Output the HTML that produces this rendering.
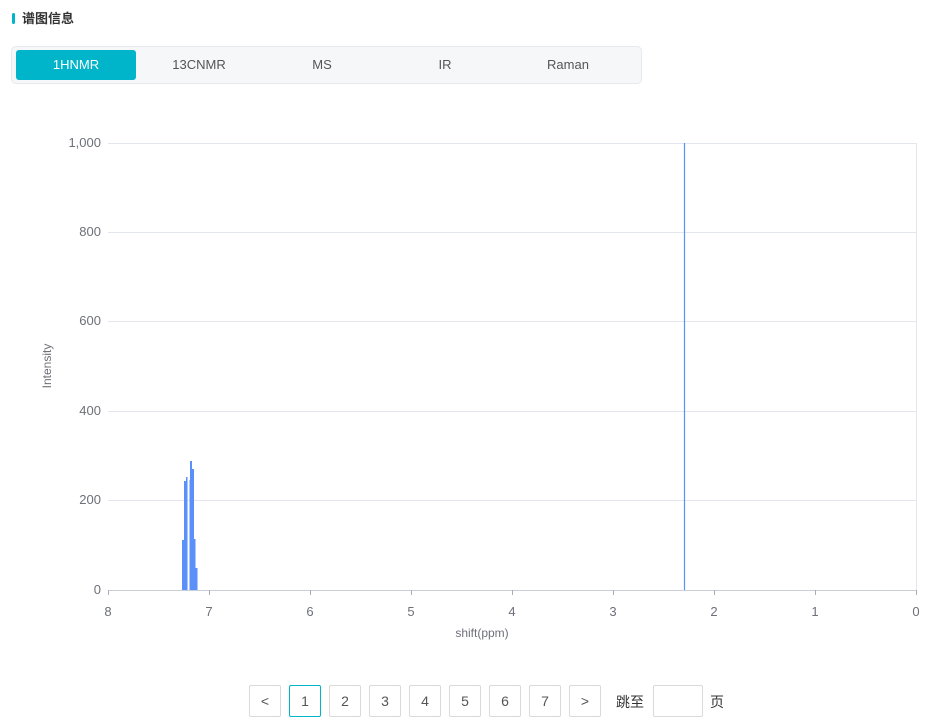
<!DOCTYPE html>
<html><head><meta charset="utf-8"><style>
body{margin:0;width:940px;height:718px;background:#fff;font-family:"Liberation Sans","Noto Sans CJK SC",sans-serif;position:relative;overflow:hidden}
.title{position:absolute;left:12px;top:10px;font-size:13px;font-weight:bold;color:#333;line-height:17px}
.title:before{content:"";position:absolute;left:0;top:3px;width:3px;height:11px;background:#00b5c9;border-radius:2px}
.title span{margin-left:10px}
.tabs{position:absolute;left:11px;top:46px;width:631px;height:38px;background:#f5f7f9;border:1px solid #e6e9ed;border-radius:5px;box-sizing:border-box}
.tab{position:absolute;top:3px;width:120px;height:30px;line-height:30px;text-align:center;font-size:13px;color:#555}
.tab.on{background:#00b5c9;color:#fff;border-radius:3px}
.pg{position:absolute;top:685px;width:32px;height:32px;border:1px solid #d9d9d9;box-sizing:border-box;text-align:center;line-height:30px;font-size:14px;color:#555;border-radius:2px}
.pg.on{border-color:#00b5c9}
</style></head><body>
<div class="title"><span>谱图信息</span></div>
<div class="tabs">
<div class="tab on" style="left:4px">1HNMR</div>
<div class="tab" style="left:127px">13CNMR</div>
<div class="tab" style="left:250px">MS</div>
<div class="tab" style="left:373px">IR</div>
<div class="tab" style="left:496px">Raman</div>
</div>
<svg width="940" height="718" style="position:absolute;left:0;top:0" font-family="Liberation Sans,sans-serif">
<g stroke="#e3e6ee" stroke-width="1">
<line x1="108" y1="143.5" x2="917" y2="143.5"/>
<line x1="108" y1="232.5" x2="917" y2="232.5"/>
<line x1="108" y1="321.5" x2="917" y2="321.5"/>
<line x1="108" y1="411.5" x2="917" y2="411.5"/>
<line x1="108" y1="500.5" x2="917" y2="500.5"/>
<line x1="916.5" y1="143" x2="916.5" y2="590"/>
</g>
<line x1="108" y1="590.5" x2="917" y2="590.5" stroke="#c9ced8"/>
<g stroke="#aab" stroke-width="1">
<line x1="108.5" y1="590" x2="108.5" y2="595"/><line x1="209.5" y1="590" x2="209.5" y2="595"/><line x1="310.5" y1="590" x2="310.5" y2="595"/><line x1="411.5" y1="590" x2="411.5" y2="595"/><line x1="512.5" y1="590" x2="512.5" y2="595"/><line x1="613.5" y1="590" x2="613.5" y2="595"/><line x1="714.5" y1="590" x2="714.5" y2="595"/><line x1="815.5" y1="590" x2="815.5" y2="595"/><line x1="916.5" y1="590" x2="916.5" y2="595"/>
</g>
<g fill="#6e7079" font-size="13" text-anchor="end">
<text x="101" y="147">1,000</text><text x="101" y="236">800</text><text x="101" y="325">600</text><text x="101" y="415">400</text><text x="101" y="504">200</text><text x="101" y="594">0</text>
</g>
<g fill="#6e7079" font-size="13" text-anchor="middle">
<text x="108" y="616">8</text><text x="209" y="616">7</text><text x="310" y="616">6</text><text x="411" y="616">5</text><text x="512" y="616">4</text><text x="613" y="616">3</text><text x="714" y="616">2</text><text x="815" y="616">1</text><text x="916" y="616">0</text>
<text x="482" y="637" font-size="12">shift(ppm)</text>
<text transform="translate(51,366) rotate(-90)" font-size="12">Intensity</text>
</g>
<line x1="684.5" y1="143" x2="684.5" y2="590" stroke="#5b8ff9" stroke-width="1.2"/>
<g fill="#5b8ff9" stroke="none">
<rect x="182" y="540" width="2" height="50"/>
<rect x="184" y="481" width="2" height="109"/>
<rect x="186" y="477" width="1.5" height="113"/>
<rect x="190" y="461" width="2" height="129"/>
<rect x="189.5" y="480" width="2" height="110"/>
<rect x="192" y="469" width="2" height="121"/>
<rect x="193.5" y="539" width="2" height="51"/>
<rect x="195.5" y="568" width="2" height="22"/>
</g>
</svg>
<div class="pg" style="left:249px">&lt;</div>
<div class="pg on" style="left:289px">1</div>
<div class="pg" style="left:329px">2</div>
<div class="pg" style="left:369px">3</div>
<div class="pg" style="left:409px">4</div>
<div class="pg" style="left:449px">5</div>
<div class="pg" style="left:489px">6</div>
<div class="pg" style="left:529px">7</div>
<div class="pg" style="left:569px">&gt;</div>
<div style="position:absolute;left:616px;top:692px;font-size:14px;color:#333">跳至</div>
<div class="pg" style="left:653px;width:50px"></div>
<div style="position:absolute;left:710px;top:692px;font-size:14px;color:#333">页</div>
</body></html>
